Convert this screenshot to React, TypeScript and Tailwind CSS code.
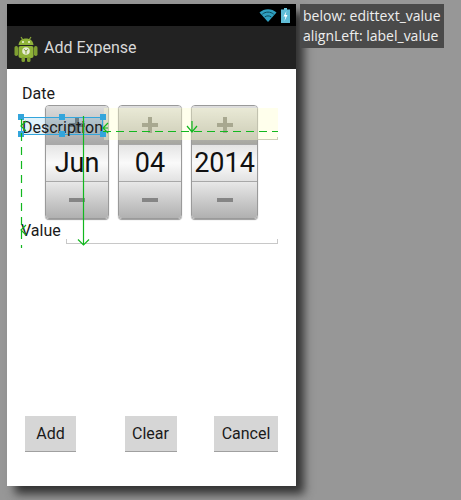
const sans = "font-['Roboto','Liberation_Sans',sans-serif]";

function AndroidIcon() {
  return (
    <svg width="24" height="28" viewBox="0 0 24 28" className="shrink-0">
      <path d="M7 3l2 3M17 3l-2 3" stroke="#8aa83a" strokeWidth="1.2" />
      <path d="M4.5 11C5 6.500 8 4.500 12 4.500S19 6.500 19.500 11z" fill="#8fb339" />
      <circle cx="9" cy="8" r="1" fill="#f2f5e2" />
      <circle cx="15" cy="8" r="1" fill="#f2f5e2" />
      <rect x="0.500" y="12" width="3.500" height="10" rx="1.700" fill="#7f9f32" />
      <rect x="20" y="12" width="3.500" height="10" rx="1.700" fill="#7f9f32" />
      <rect x="4.500" y="12" width="15" height="12" rx="2" fill="#8fb339" />
      <rect x="7.500" y="23" width="3.500" height="5" rx="1.500" fill="#7f9f32" />
      <rect x="13" y="23" width="3.500" height="5" rx="1.500" fill="#7f9f32" />
      <circle cx="12" cy="17" r="3.800" fill="#e8ecd8" />
      <path d="M12 17l-2.200-1.800M12 17l2.200-1.800M12 17v2.800" stroke="#7f9f32" strokeWidth="1" />
    </svg>
  );
}

function WifiIcon() {
  return (
    <svg width="18" height="14" viewBox="0 0 17 14">
      <path d="M0 4.500C4.500 0 12.500 0 17 4.500L8.500 14z" fill="#2f9fbf" />
      <path d="M2.800 6.200C6 3.400 11 3.400 14.200 6.200" stroke="#0b4a5c" strokeWidth="1" fill="none" />
      <path d="M5.200 9C7 7.500 10 7.500 11.800 9" stroke="#0b4a5c" strokeWidth="1" fill="none" />
    </svg>
  );
}

function BatteryIcon() {
  return (
    <svg width="9" height="15" viewBox="0 0 9 15">
      <rect x="3" y="0" width="3" height="2" fill="#6fc6dc" />
      <rect x="0" y="1.500" width="9" height="13.500" fill="#5fbcd6" />
      <path d="M5.500 3L2.500 8.500h2L3.500 13l3-6h-2z" fill="#fff" />
    </svg>
  );
}

function Spinner({ value, width, tinted }: { value: string; width: string; tinted?: boolean }) {
  return (
    <div
      className={`${width} h-[114px] flex flex-col rounded-[4px] border border-[#9a9a9a] overflow-hidden shadow-[0_1px_1px_#999]`}
    >
      <div
        className={`h-[38px] flex items-center justify-center bg-gradient-to-b ${
          tinted ? "from-[#dedede] to-[#a6a6a0]" : "from-[#dcdcdc] to-[#a8a8a8]"
        }`}
      >
        <div className="relative w-4 h-4">
          <div className={`absolute left-0 right-0 top-[6px] h-1 ${tinted ? "bg-[#6f6f66]" : "bg-[#777777]"}`} />
          <div className={`absolute top-0 bottom-0 left-[6px] w-1 ${tinted ? "bg-[#6f6f66]" : "bg-[#777777]"}`} />
        </div>
      </div>
      <div className="h-[38px] flex items-center justify-center border-y border-[#a8a8a8] bg-gradient-to-b from-[#e4e4e4] via-[#fafafa] to-[#e2e2e2] text-[27px] text-[#111]">
        {value}
      </div>
      <div className="flex-1 flex items-center justify-center bg-gradient-to-b from-[#e8e8e8] to-[#b0b0b0]">
        <div className="w-4 h-1 bg-[#858585]" />
      </div>
    </div>
  );
}

function ActionButton({ label, width }: { label: string; width: string }) {
  return (
    <button className={`${width} h-9 bg-[#d6d6d6] border-b border-[#a0a0a0] text-[16px] text-[#1a1a1a]`}>
      {label}
    </button>
  );
}

function Handle({ className }: { className: string }) {
  return <div className={`absolute w-[6px] h-[6px] bg-[#33a5dc] ${className}`} />;
}

export default function App() {
  return (
    <div className={`relative w-[461px] h-[500px] overflow-hidden bg-[#979797] pt-1 pl-[7px] ${sans}`}>
      <div className="relative w-[289px] h-[482px] flex flex-col bg-white shadow-[8px_8px_9px_#333]">
        <div className="h-[22px] bg-black flex items-center justify-end gap-[4px] pr-[6px] shrink-0">
          <WifiIcon />
          <BatteryIcon />
        </div>
        <div className="h-[43px] bg-[#222222] flex items-center gap-[6px] pl-[7px] shrink-0">
          <AndroidIcon />
          <span className="text-[16px] text-[#d8d8d8]">Add Expense</span>
        </div>
        <div className="flex-1 flex flex-col">
          <div className="pl-[15px] pt-[15px] h-9 text-[16px] leading-[20px] text-[#1a1a1a]">Date</div>
          <div className="flex gap-[9px] pl-[38px]">
            <Spinner value="Jun" width="w-[64px]" />
            <Spinner value="04" width="w-[64px]" tinted />
            <Spinner value="2014" width="w-[67px]" tinted />
          </div>
          <div className="pl-[14px] mt-[2px] text-[16px] leading-[20px] text-[#1a1a1a]">Value</div>
          <div className="mt-auto flex justify-between px-[18px] pb-[34px]">
            <ActionButton label="Add" width="w-[51px]" />
            <ActionButton label="Clear" width="w-[52px] ml-[11px]" />
            <ActionButton label="Cancel" width="w-[64px]" />
          </div>
        </div>

        {/* layout editor overlays */}
        <div className="absolute left-[97px] top-[104px] w-[174px] h-[32px] bg-[#ffffd0]/40" />
        <div className="absolute left-[251px] top-[133px] w-[20px] h-[3px] border-b border-r border-[#cfcfb8]" />
        <div className="absolute left-[14px] top-[113px] w-[82px] h-[18px] border border-[#33a5dc] bg-[#33a5dc]/15 text-[16px] leading-[19px] text-[#1a1a1a]">
          <span className="block whitespace-nowrap">Description</span>
        </div>
        <Handle className="left-[11px] top-[110px]" />
        <Handle className="left-[52px] top-[110px]" />
        <Handle className="left-[93px] top-[110px]" />
        <Handle className="left-[11px] top-[127px]" />
        <Handle className="left-[52px] top-[127px]" />
        <Handle className="left-[93px] top-[127px]" />
        <div className="absolute left-[59px] top-[235px] w-[212px] h-[5px] border-b border-x border-[#c8c8c8]" />
        <svg width="290" height="260" viewBox="0 0 290 260" className="absolute left-0 top-0 pointer-events-none">
          <g stroke="#12b81e" fill="none" strokeWidth="1.2">
            <path d="M96 127.500H271" strokeDasharray="8 5" />
            <path d="M14.500 115V244" strokeDasharray="8 6" />
            <path d="M76.500 112V241" />
            <path d="M71 235.500l5.500 5.500 5.500-5.500" />
            <path d="M180 122l5 6 5-6M185 117v11" />
            <path d="M19 117l-5 5 5 5" />
            <path d="M101 119l-5 5 5 5M96 124h5" />
            <path d="M19 221l-5 5 5 5" />
          </g>
        </svg>
      </div>

      <div className="absolute left-[300px] top-1 w-[144px] h-[44px] bg-[#4a4a4a] px-[3px] text-[14px] leading-[20px] text-[#eeeeee] flex flex-col justify-center font-['Open_Sans','Liberation_Sans',sans-serif]">
        <div className="whitespace-nowrap">below: edittext_value</div>
        <div className="whitespace-nowrap">alignLeft: label_value</div>
      </div>
    </div>
  );
}
